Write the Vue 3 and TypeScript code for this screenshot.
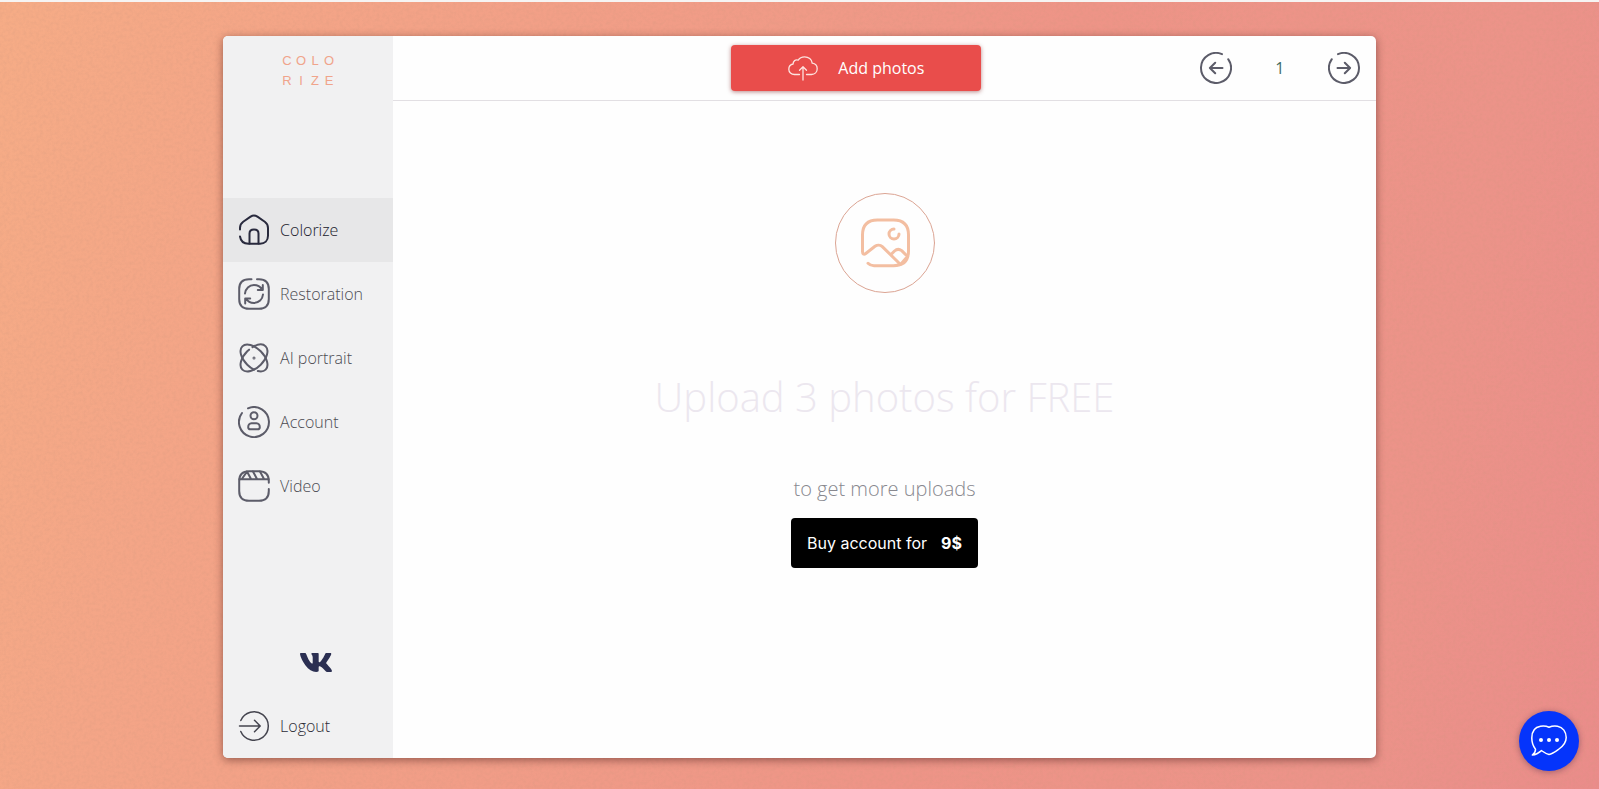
<script setup lang="ts">
import { ref } from 'vue'

type IconName = 'home' | 'restore' | 'atom' | 'account' | 'video'

interface NavItem {
  icon: IconName
  label: string
}

const navItems: NavItem[] = [
  { icon: 'home', label: 'Colorize' },
  { icon: 'restore', label: 'Restoration' },
  { icon: 'atom', label: 'AI portrait' },
  { icon: 'account', label: 'Account' },
  { icon: 'video', label: 'Video' },
]

const active = ref<IconName>('home')
const page = ref(1)
const logoLetters: string[] = [...'COLORIZE']

function previousPage(): void {
  page.value = Math.max(1, page.value - 1)
}
</script>

<template>
  <div class="screen">
    <svg class="grain" aria-hidden="true">
      <filter id="grain-noise">
        <feTurbulence type="fractalNoise" baseFrequency="0.3" numOctaves="3" />
        <feColorMatrix type="matrix" values="0 0 0 0 0.6  0 0 0 0 0.3  0 0 0 0 0.2  1.6 0 0 0 -0.6" />
      </filter>
      <rect width="100%" height="100%" filter="url(#grain-noise)" />
    </svg>

    <div class="card">
      <aside class="sidebar">
        <a class="logo" href="#" aria-label="Colorize">
          <span v-for="(letter, i) in logoLetters" :key="i">{{ letter }}</span>
        </a>

        <nav class="nav">
          <a
            v-for="item in navItems"
            :key="item.icon"
            href="#"
            class="nav-item"
            :class="{ active: active === item.icon }"
            @click.prevent="active = item.icon"
          >
            <svg class="icon" viewBox="0 0 32 32" aria-hidden="true">
              <template v-if="item.icon === 'home'">
                <path d="M2 15.4V14c0-2.7.9-4.500 3.200-6.200L12.600 2.600c2.200-1.500 4.600-1.500 6.800 0l7.400 5.200c2.300 1.700 3.200 3.500 3.200 6.200v7.700c0 4.800-3.200 8-8 8H10.500c-4.700 0-7.800-2.700-8.500-7.200" />
                <path d="M11.500 29.500V19.500c0-2.600 1.700-4 4.500-4s4.500 1.400 4.500 4v10" />
              </template>
              <template v-else-if="item.icon === 'restore'">
                <path d="M13.500 1.200H11c-6.500 0-9.800 3.300-9.800 9.800v10c0 6.500 3.300 9.800 9.800 9.800h10c6.500 0 9.800-3.300 9.800-9.800V11c0-6.500-3.300-9.800-9.800-9.800h-2" />
                <path d="M7 15.500C7.500 10.600 11.200 7 16 7c3.400 0 6.400 1.700 8 4.500M24.800 7v5h-5" />
                <path d="M25 16.500C24.500 21.400 20.800 25 16 25c-3.400 0-6.400-1.700-8-4.500M7.200 25.500v-5h5" />
              </template>
              <template v-else-if="item.icon === 'atom'">
                <ellipse cx="16" cy="16" rx="16.5" ry="9.5" transform="rotate(45 16 16)" pathLength="100" stroke-dasharray="10 5 85 0" />
                <ellipse cx="16" cy="16" rx="16.5" ry="9.5" transform="rotate(-45 16 16)" pathLength="100" stroke-dasharray="78 5 17 0" />
                <circle cx="16" cy="16" r="0.5" />
              </template>
              <template v-else-if="item.icon === 'account'">
                <path d="M10 2.300A15 15 0 1 1 4 7" />
                <circle cx="16" cy="9.7" r="3.5" />
                <path d="M13.500 17.200h5c2 0 3.300 2 3.300 4 0 1.400-.8 2.100-2.200 2.100h-7.200c-1.400 0-2.200-.7-2.200-2.100 0-2 1.300-4 3.300-4z" />
              </template>
              <template v-else>
                <path d="M30.800 12.700V11c0-6.500-3.300-9.800-9.800-9.800H11C4.500 1.200 1.200 4.500 1.200 11v10c0 6.500 3.300 9.800 9.800 9.800h10c6.500 0 9.800-3.300 9.800-9.800v-2" />
                <path d="M1.500 9.200h29M4 8.800l5-7.200M15 1.500l4 7.500M9 1.500l4 7.500M22 1.500l4 7.500" />
              </template>
            </svg>
            <span>{{ item.label }}</span>
          </a>
        </nav>

        <a class="vk" href="#" aria-label="VK">
          <svg viewBox="18 96 540 320" aria-hidden="true">
            <path d="M545 117.700c3.700-12.500 0-21.700-17.800-21.700h-58.900c-15 0-21.900 7.900-25.600 16.700 0 0-30 73.100-72.400 120.500-13.700 13.700-20 18.100-27.500 18.100-3.700 0-9.400-4.400-9.400-16.900V117.700c0-15-4.200-21.700-16.600-21.700h-92.600c-9.400 0-15 7-15 13.500 0 14.200 21.200 17.500 23.400 57.500v86.800c0 19-3.400 22.500-10.900 22.500-20 0-68.600-73.400-97.400-157.400-5.800-16.300-11.500-22.900-26.600-22.900H38.800c-16.800 0-20.200 7.900-20.200 16.700 0 15.600 20 93.100 93.100 195.500C160.400 378.100 229 416 291.400 416c37.500 0 42.100-8.400 42.100-22.900 0-66.800-3.400-73.100 15.400-73.100 8.700 0 23.700 4.400 58.700 38.100 40 40 46.600 57.900 69 57.900h58.900c16.800 0 25.300-8.400 20.400-25-11.200-34.900-86.900-106.700-90.300-111.500-8.700-11.200-6.200-16.200 0-26.200.1-.1 72-101.300 79.400-135.600z" />
          </svg>
        </a>

        <a class="nav-item logout" href="#">
          <svg class="icon" viewBox="0 0 32 32" aria-hidden="true">
            <path d="M2.800 10.500a14.300 14.300 0 1 1 0 11M1.500 16H22M16.500 10.300 22.200 16l-5.700 5.700" />
          </svg>
          <span>Logout</span>
        </a>
      </aside>

      <main class="main">
        <header class="toolbar">
          <button class="add" type="button">
            <svg viewBox="0 0 30 25" aria-hidden="true">
              <path d="M11.500 18.500H6.500C3.200 18.500.8 16.200.8 13.200c0-2.600 1.800-4.700 4.300-5.200C5 5 7.500 3.300 10.200 4.200 11.300 2.200 13.800.8 16.600.8c4 0 7.200 2.600 7.600 6.300 3 .4 5 2.700 5 5.700 0 3.300-2.400 5.700-5.700 5.700H18.500" />
              <path d="M15 24V11M11.500 14.300 15 10.800l3.500 3.500" />
            </svg>
            <span>Add photos</span>
          </button>
          <div class="pager">
            <button type="button" aria-label="Previous page" @click="previousPage">
              <svg class="icon" viewBox="0 0 32 32" aria-hidden="true">
                <path d="M22 2.200A15 15 0 1 0 28.200 7.200M22.500 16H10M15.200 10.700 9.900 16l5.300 5.300" />
              </svg>
            </button>
            <span class="page-number">{{ page }}</span>
            <button type="button" aria-label="Next page" @click="page++">
              <svg class="icon" viewBox="0 0 32 32" aria-hidden="true">
                <path d="M10 2.200A15 15 0 1 1 3.800 7.200M9.500 16H22M16.800 10.700l5.300 5.300-5.300 5.300" />
              </svg>
            </button>
          </div>
        </header>

        <section class="content">
          <svg class="photo" viewBox="0 0 100 100" aria-hidden="true">
            <circle class="ring" cx="50" cy="50" r="49.5" />
            <path d="M33 70.300c1.500 1.600 3.500 2.400 6 2.400h19.500c10 0 15-5 15-15V42c0-10-5-15-15-15h-16c-10 0-15 5-15 15v16.500c0 2.500 1.300 3.500 3.300 2l9.200-7.200c2.200-1.600 5.300-1.600 7.300.3L65.500 71.500" />
            <path d="M57 60.500l2.500-2.500c2-1.800 5-2 7.200-.4L72.500 63.500 66 71" />
            <path d="M59 36a5 5 0 1 0 5 5" />
          </svg>
          <h1>Upload 3 photos for FREE</h1>
          <p>to get more uploads</p>
          <button class="buy" type="button"><span>Buy account for</span><strong>9$</strong></button>
        </section>
      </main>
    </div>

    <button class="chat" type="button" aria-label="Open chat">
      <svg viewBox="0 0 36 32" aria-hidden="true">
        <path d="M18 2.200C21 .9 24 .8 26.500 1.200 32 2.100 35.200 7 35.200 12.500c0 5-3 8.500-7.200 11.500-3 2.200-6.500 5-10 5.500-3-.7-5.500-2.500-7.500-3.900-2.800 2.500-5.500 4.100-9.200 4.400 2.300-1.700 3.300-3.500 3.200-5.800C2 21 .8 17.500.8 13 .8 6.500 4 2 9.500 1.200 12.500.8 15.500 1 18 2.200z" />
        <g class="dots">
          <circle cx="10" cy="15" r="2" />
          <circle cx="18" cy="15" r="2" />
          <circle cx="26" cy="15" r="2" />
        </g>
      </svg>
    </button>
  </div>
</template>

<style>
body {
  margin: 0;
}
</style>

<style scoped>
.screen {
  position: relative;
  box-sizing: border-box;
  display: flex;
  justify-content: center;
  min-height: 100vh;
  padding: 34px 0 31px;
  border-top: 2px solid #f6f4f3;
  background: linear-gradient(105deg, #f6ac86 0%, #f4a587 16%, #ee9487 60%, #ec9389 85%, #ea8c8a 100%);
  font-family: "Open Sans", "Noto Sans", sans-serif;
  font-weight: 300;
  font-size: 16px;
}

.grain {
  position: absolute;
  inset: 0;
  width: 100%;
  height: 100%;
  opacity: 0.25;
}

button {
  padding: 0;
  border: 0;
  background: none;
  color: inherit;
  font: inherit;
  cursor: pointer;
}

a {
  color: inherit;
  text-decoration: none;
}

svg {
  display: block;
  fill: none;
  stroke: currentColor;
  stroke-linecap: round;
  stroke-linejoin: round;
}

.card {
  position: relative;
  display: flex;
  width: 72.1%;
  border-radius: 5px;
  overflow: hidden;
  background: #fefefe;
  box-shadow: 0 2px 8px rgba(60, 20, 20, 0.5);
}

.sidebar {
  display: flex;
  flex-direction: column;
  flex: none;
  width: 170px;
  background: #f1f1f2;
}

.logo {
  display: grid;
  grid-template-columns: repeat(4, 14px);
  grid-auto-rows: 20px;
  justify-content: center;
  box-sizing: border-box;
  height: 162px;
  padding-top: 15px;
  align-content: start;
  color: #f0a48b;
  font-family: "Liberation Sans", sans-serif;
  font-size: 13px;
  line-height: 20px;
  text-align: center;
}

.nav-item {
  display: flex;
  align-items: center;
  gap: 10px;
  height: 64px;
  padding-left: 15px;
  color: #4c4c53;
}

.nav-item.active {
  background: #e7e7e8;
  color: #20202c;
}

.icon {
  width: 32px;
  height: 32px;
  stroke: #5c5c69;
  stroke-width: 2;
}

.nav-item.active .icon {
  stroke: #292a3d;
}

.vk {
  align-self: center;
  width: 32px;
  margin-top: auto;
  margin-left: 16px;
  color: #2b2f52;
}

.vk svg {
  fill: currentColor;
  stroke: none;
}

.logout {
  margin-top: 22px;
  color: #2c2c36;
}

.logout .icon {
  stroke: #44444e;
  stroke-width: 1.5;
}

.main {
  display: flex;
  flex-direction: column;
  flex: 1;
}

.toolbar {
  display: grid;
  grid-template-columns: 6fr 250px 7fr;
  align-items: center;
  height: 64px;
  border-bottom: 1px solid #e2dfe3;
}

.add {
  grid-column: 2;
  display: flex;
  align-items: center;
  justify-content: center;
  gap: 20px;
  height: 46px;
  border-radius: 4px;
  background: #e94d4b;
  box-shadow: 0 1px 4px rgba(120, 20, 20, 0.5);
  color: #fff;
  font-weight: 400;
}

.add svg {
  width: 30px;
  height: 25px;
  stroke: #fde3df;
  stroke-width: 1.3;
}

.pager {
  display: flex;
  align-items: center;
  justify-content: space-between;
  justify-self: end;
  width: 160px;
  margin-right: 16px;
}

.page-number {
  color: #3f6a62;
  font-weight: 400;
}

.content {
  display: flex;
  flex-direction: column;
  align-items: center;
  padding-top: 92px;
}

.photo {
  width: 100px;
  height: 100px;
  stroke: #f3bea1;
  stroke-width: 3;
}

.ring {
  stroke: #dba493;
  stroke-width: 1;
}

h1 {
  margin: 74px 0 0;
  color: #ece7ef;
  font-weight: 300;
  font-size: 40px;
  line-height: 60px;
}

p {
  margin: 47px 0 0;
  color: #88888f;
  font-size: 20px;
  line-height: 30px;
}

.buy {
  display: flex;
  align-items: center;
  gap: 14px;
  height: 50px;
  margin-top: 14px;
  padding: 0 16px;
  border-radius: 4px;
  background: #000;
  color: #fff;
  font-family: Inter, sans-serif;
  font-weight: 400;
}

.chat {
  position: fixed;
  right: 20px;
  bottom: 18px;
  display: grid;
  place-items: center;
  width: 60px;
  height: 60px;
  border-radius: 50%;
  background: #0534fb;
  box-shadow: 0 1px 6px rgba(40, 20, 60, 0.4);
  color: #fff;
}

.chat svg {
  width: 36px;
  height: 32px;
  stroke-width: 1.5;
}

.dots {
  fill: #fff;
  stroke: none;
}
</style>
